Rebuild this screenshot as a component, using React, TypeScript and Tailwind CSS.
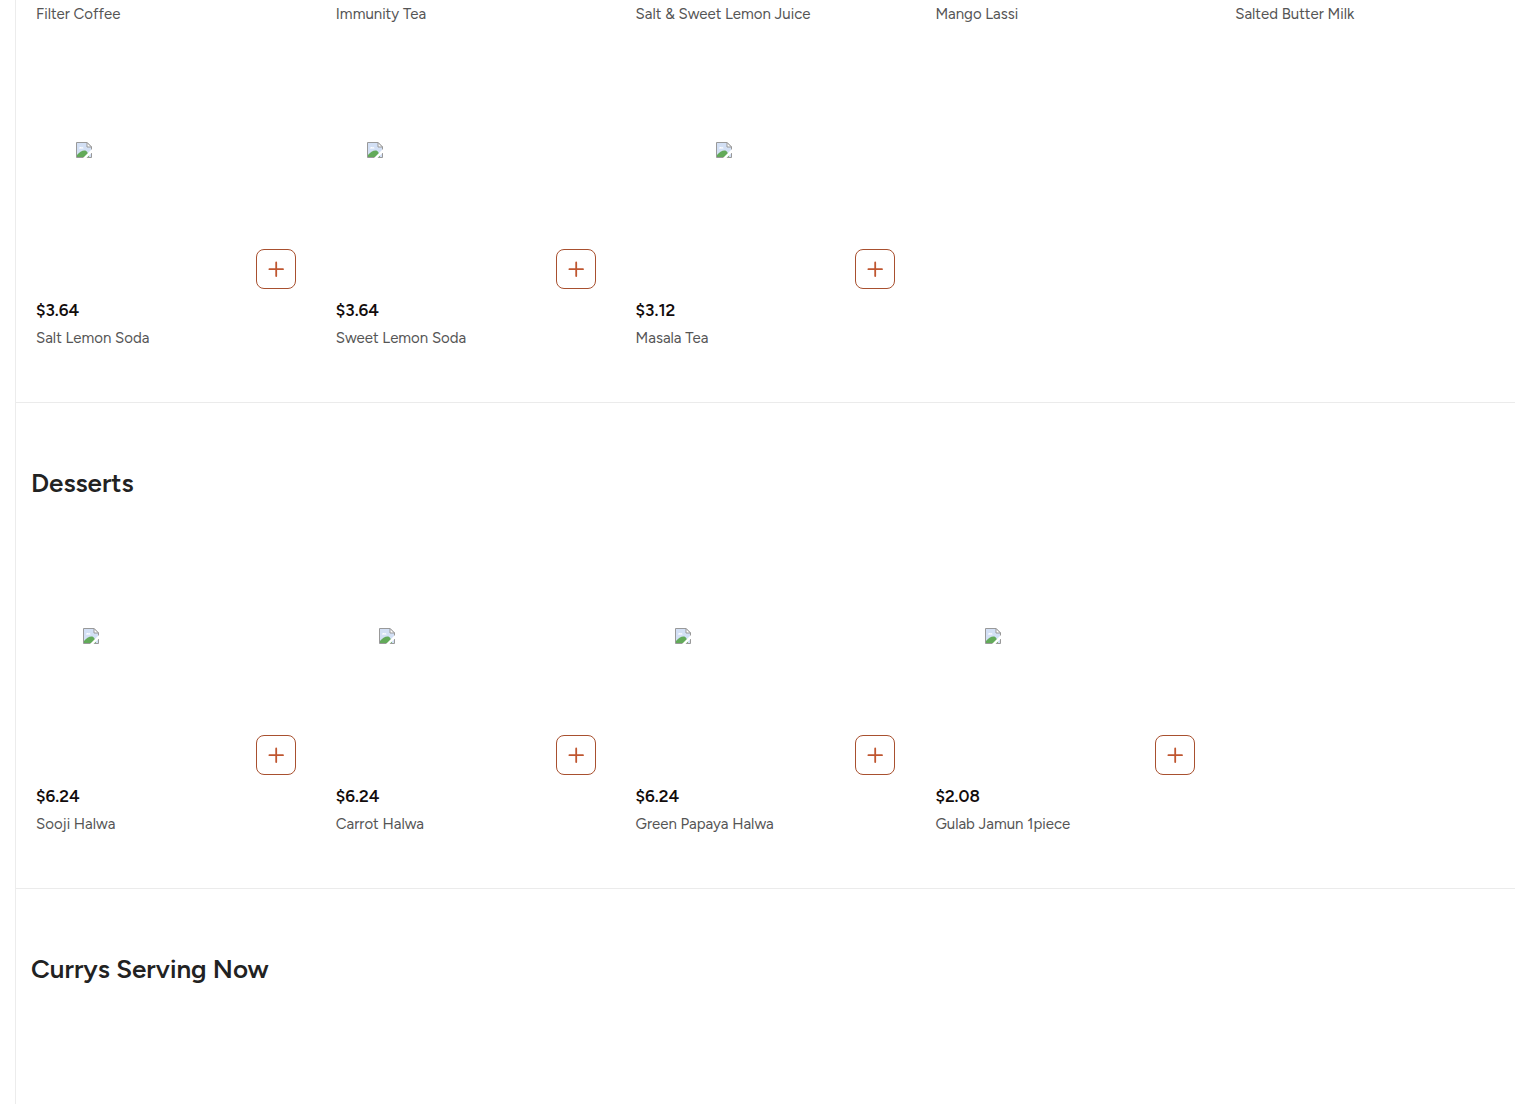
import React from 'react';

const drinkNames = ["Filter Coffee", "Immunity Tea", "Salt & Sweet Lemon Juice", "Mango Lassi", "Salted Butter Milk"];

const drinks = [
    {name: "Salt Lemon Soda", price: "$3.64", indent: "pl-10"},
    {name: "Sweet Lemon Soda", price: "$3.64", indent: "pl-[31px]"},
    {name: "Masala Tea", price: "$3.12", indent: "pl-20"},
];

const desserts = [
    {name: "Sooji Halwa", price: "$6.24", indent: "pl-[47px]"},
    {name: "Carrot Halwa", price: "$6.24", indent: "pl-[43px]"},
    {name: "Green Papaya Halwa", price: "$6.24", indent: "pl-[39px]"},
    {name: "Gulab Jamun 1piece", price: "$2.08", indent: "pl-[50px]"},
];

type Item = { name: string; price: string; indent: string };

const MissingImage = () => (
    <svg width="16" height="16" viewBox="0 0 16 16" aria-hidden="true">
        <path d="M0.5 0.5H11L15.5 5V15.5H0.5Z" fill="#d3e0f5"/>
        <path d="M3 6.5C3 5 5 4.5 5.5 5.5C6.5 5 7.5 5.5 7.5 6.5Z" fill="#fff"/>
        <path d="M1 15V13C3 10.5 6 8.5 8.5 8.5C11 8.5 12 11 13 15Z" fill="#62aa59"/>
        <path d="M0.5 15.5V0.5H11L15.5 5V15.5Z" fill="none" stroke="#999999"/>
        <path d="M11 0.5V5H15.5Z" fill="#fff" stroke="#999999"/>
        <path d="M16 7L7 16H10.5L16 10.5Z" fill="#fff"/>
    </svg>
);

const ItemName = ({name}: { name: string }) => (
    <p className="text-[15px] leading-6 text-[#555555]">{name}</p>
);

const ItemCard = ({item}: { item: Item }) => (
    <div className="p-5">
        <div className="flex flex-col justify-between h-[223px] pt-[76px]">
            <div className={item.indent}>
                <MissingImage/>
            </div>
            <button
                type="button"
                aria-label={`Add ${item.name}`}
                className="flex items-center justify-center self-end size-10 rounded-lg border border-[#a8502f] bg-white"
            >
                <svg width="16" height="16" viewBox="0 0 16 16" stroke="#bf5630" strokeWidth="1.8" strokeLinecap="round">
                    <path d="M8.2 1.5V15M1.4 8.2H15"/>
                </svg>
            </button>
        </div>
        <p className="mt-[9px] mb-1 text-[17px] leading-6 font-semibold text-[#120c0c]">{item.price}</p>
        <ItemName name={item.name}/>
    </div>
);

const ItemGrid = ({items}: { items: Item[] }) => (
    <div className="grid grid-cols-5">
        {items.map((item) => <ItemCard key={item.name} item={item}/>)}
    </div>
);

const SectionTitle = ({children}: { children: React.ReactNode }) => (
    <h2 className="pt-16 pb-[33px] pl-[15px] text-[26px] leading-8 font-semibold text-[#222222]">{children}</h2>
);

const App = () => {
    return (
        <main className="min-h-screen px-[15px] bg-white font-['Figtree','Lato',sans-serif]">
            <div className="min-h-screen border-l border-[#ececec]">
                <section className="pb-8 border-b border-[#ebebeb]">
                    <div className="grid grid-cols-5 pt-0.5 pb-5">
                        {drinkNames.map((name) => (
                            <div key={name} className="px-5">
                                <ItemName name={name}/>
                            </div>
                        ))}
                    </div>
                    <ItemGrid items={drinks}/>
                </section>
                <section className="pb-8 border-b border-[#ebebeb]">
                    <SectionTitle>Desserts</SectionTitle>
                    <ItemGrid items={desserts}/>
                </section>
                <section>
                    <SectionTitle>Currys Serving Now</SectionTitle>
                </section>
            </div>
        </main>
    );
};

export default App;
